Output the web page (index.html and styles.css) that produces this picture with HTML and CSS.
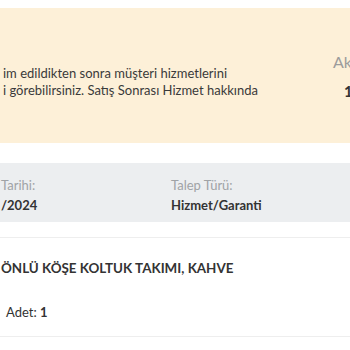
FILE: index.html
```html
<!DOCTYPE html>
<html lang="tr">
<head>
<meta charset="utf-8">
<link rel="stylesheet" href="styles.css">
</head>
<body>
<div class="page">
  <section class="notice">
    <p class="notice-text">im edildikten sonra müşteri hizmetlerini<br>i görebilirsiniz. Satış Sonrası Hizmet hakkında</p>
    <div class="status">
      <span class="status-label">Ak</span>
      <span class="status-value">1</span>
    </div>
  </section>
  <section class="info">
    <div class="info-col info-date">
      <span class="info-label">Tarihi:</span>
      <span class="info-value">/2024</span>
    </div>
    <div class="info-col">
      <span class="info-label">Talep Türü:</span>
      <span class="info-value">Hizmet/Garanti</span>
    </div>
  </section>
  <section class="product">
    <h2 class="product-title">ÖNLÜ KÖŞE KOLTUK TAKIMI, KAHVE</h2>
    <p class="product-qty">Adet: <b>1</b></p>
  </section>
</div>
</body>
</html>
```
FILE: styles.css
```css
html, body {
  margin: 0;
  padding: 0;
  background: #ffffff;
  overflow: hidden;
}
body {
  font-family: Lato, "Open Sans", sans-serif;
  font-size: 13px;
  color: #333333;
}
.page {
  width: 350px;
  padding-top: 8px;
}
.notice {
  background: #fdf0d8;
  height: 135px;
  display: flex;
}
.notice-text {
  margin: 0;
  padding: 57px 0 0 3px;
  line-height: 17px;
  color: #3a3a3a;
  flex: 1;
}
.status {
  display: flex;
  flex-direction: column;
  width: 17px;
  padding-top: 45px;
  gap: 11px;
}
.status-label {
  color: #9c9c9c;
  font-size: 16px;
  line-height: 18px;
}
.status-value {
  font-weight: 700;
  font-size: 15px;
  line-height: 18px;
  padding-left: 11px;
}
.info {
  margin-top: 20px;
  background: #eceef0;
  height: 59px;
  display: flex;
  box-sizing: border-box;
  padding-top: 12px;
}
.info-col {
  display: flex;
  flex-direction: column;
  line-height: 20px;
}
.info-date {
  width: 170px;
  padding-left: 1px;
}
.info-label {
  color: #a0a3a6;
}
.info-value {
  font-weight: 700;
  color: #333333;
}
.product {
  margin-top: 15px;
  border-top: 1px solid #eeeeee;
  border-bottom: 1px solid #eeeeee;
  height: 98px;
}
.product-title {
  margin: 0;
  padding: 20px 0 0 1px;
  font-size: 13.4px;
  line-height: 20px;
  font-weight: 700;
  color: #333333;
}
.product-qty {
  margin: 24px 0 0 6px;
  line-height: 20px;
  color: #333333;
}
.product-qty b {
  font-weight: 700;
}
```
